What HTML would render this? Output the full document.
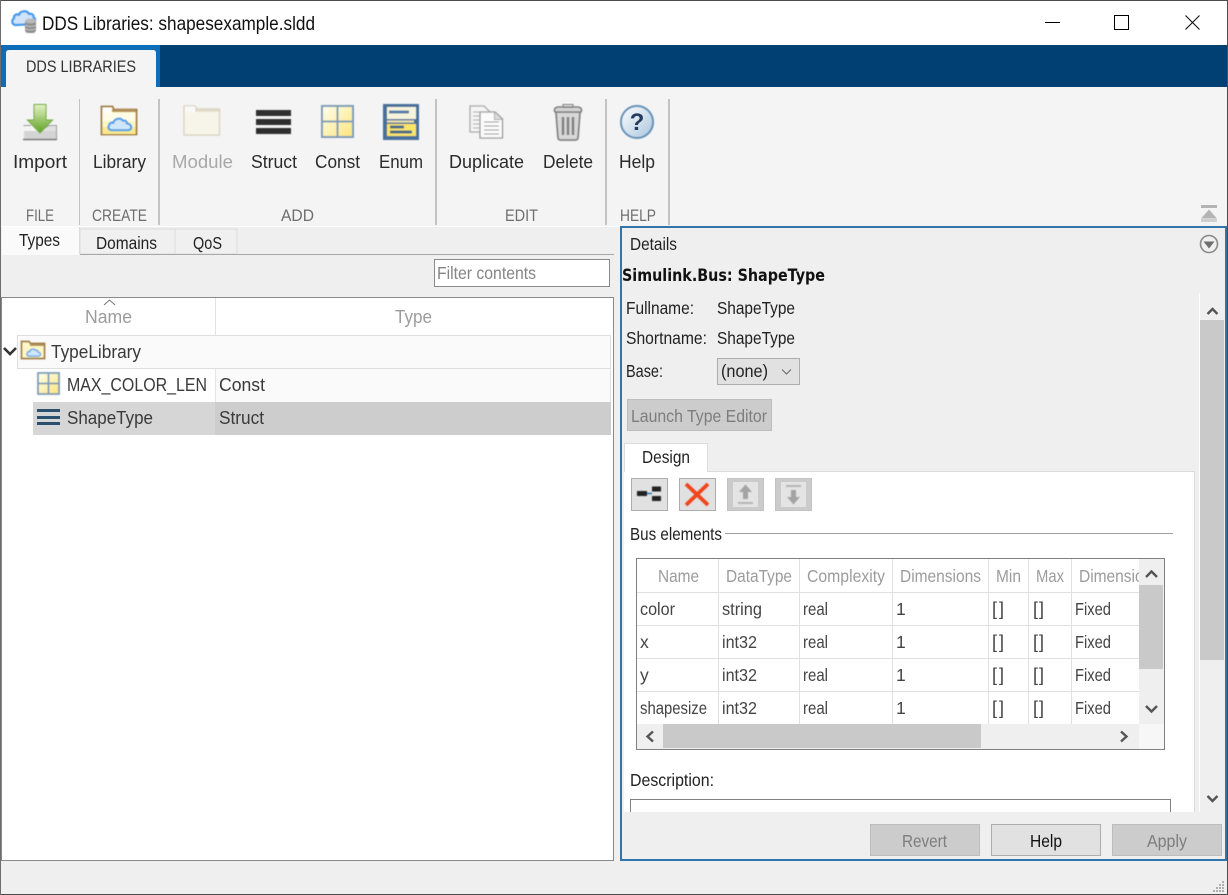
<!DOCTYPE html>
<html><head><meta charset="utf-8"><title>DDS Libraries: shapesexample.sldd</title>
<style>
html,body{margin:0;padding:0;width:1228px;height:895px;overflow:hidden;background:#fff}
svg{display:block}
text{font-family:"Liberation Sans",sans-serif;font-size:17.5px;fill:#262626;white-space:pre}
.l{fill:#2b2b2b;font-size:18.5px}
.g{fill:#6e6e6e;font-size:17px}
.d{fill:#a8a8a8}
.t{fill:#444;font-size:17.5px}
.h{fill:#9c9c9c;font-size:17.5px}
.s{font-size:17.5px;fill:#222}
.r{font-size:18.5px;fill:#3a3a3a}
.o{font-size:17.500px;fill:#7d7d7d}
.b{font-size:18px;fill:#444}
</style></head><body>
<svg width="1228" height="895" viewBox="0 0 1228 895" xmlns="http://www.w3.org/2000/svg">
<defs>
<linearGradient id="fy" x1="0" y1="0" x2="1" y2="1"><stop offset="0" stop-color="#fffff0"/><stop offset="1" stop-color="#fbe47a"/></linearGradient>
<linearGradient id="gr" x1="0" y1="0" x2="0" y2="1"><stop offset="0" stop-color="#e4f2c4"/><stop offset="1" stop-color="#5fa224"/></linearGradient>
<linearGradient id="hb" x1="0" y1="0" x2="1" y2="1"><stop offset="0" stop-color="#fff"/><stop offset="1" stop-color="#a9c6dd"/></linearGradient>
<filter id="bl" x="-10%" y="-10%" width="120%" height="120%"><feGaussianBlur stdDeviation=".45"/></filter>
<clipPath id="tc"><rect x="637" y="559" width="502" height="165"/></clipPath>
<symbol id="cloud" viewBox="0 0 26 16"><path d="M6 14.500C2.500 14.500 1.500 11.500 3 9.800 3 7.500 5.500 6.500 7 7.500 8 3 14 1.800 16.500 5.500 18.500 4.500 20.500 6 20 8 23.500 8 25 11 24 13 23.500 14 22.500 14.500 21 14.500Z" fill="#cfe6fb" stroke="#4d9fe8" stroke-width="2" stroke-linejoin="round"/></symbol>
</defs>

<!-- window -->
<rect width="1228" height="895" fill="#efefef"/>
<rect x="0" y="0" width="1228" height="45" fill="#fff"/>
<rect x="0" y="0" width="1228" height="1" fill="#4d4d4d"/>

<!-- title icon -->
<g filter="url(#bl)">
<path d="M16 25C12 25 11 20 14 18.500 13.500 15 17 13.500 19 15 20 10.500 27 10 29 14 31.500 13 34 15 33.500 17.500 36 18.500 35.500 23 33 24Z" fill="#cfe4fa" stroke="#3f98ea" stroke-width="2.200" stroke-linejoin="round"/>
<rect x="25" y="20" width="11" height="13" rx="3" fill="#8d8d8d"/>
<ellipse cx="30.500" cy="21" rx="5.500" ry="2.500" fill="#b9b9b9"/>
<path d="M25.500 25.500q5 2 10 0M25.500 29q5 2 10 0" stroke="#c8c8c8" fill="none"/>
</g>
<text x="42" y="30" style="font-size:19.500px;fill:#111" textLength="273" lengthAdjust="spacingAndGlyphs">DDS Libraries: shapesexample.sldd</text>

<!-- window controls -->
<rect x="1045" y="22" width="15" height="1" fill="#000"/>
<rect x="1114.500" y="15.500" width="14" height="14" fill="none" stroke="#000"/>
<path d="M1185.500 15.500L1199.500 29.500M1199.500 15.500L1185.500 29.500" stroke="#111" stroke-width="1.100"/>

<!-- ribbon band -->
<rect x="1" y="45" width="1227" height="42" fill="#004072"/>
<rect x="1" y="45" width="159" height="42" fill="#0f6cb6"/>
<path d="M6 87V53q0-3 3-3H153q3 0 3 3V87Z" fill="#f4f4f4"/>
<text x="26" y="72" style="font-size:16.500px;fill:#333" textLength="110" lengthAdjust="spacingAndGlyphs">DDS LIBRARIES</text>

<!-- ribbon -->
<rect x="1" y="87" width="1227" height="139" fill="#f4f4f4"/>
<g fill="#c3c3c3">
<rect x="79" y="99" width="1" height="126"/>
<rect x="158" y="99" width="2" height="126"/>
<rect x="435" y="99" width="2" height="126"/>
<rect x="605" y="99" width="2" height="126"/>
<rect x="668" y="99" width="2" height="126"/>
</g>

<g filter="url(#bl)">
<!-- Import icon -->
<path d="M23.500 125.500H31M49 125.500H56.500V139.500H23.500Z" fill="#e0e0e0" stroke="#9a9a9a"/>
<rect x="24" y="131" width="32" height="8" fill="#d4d4d4"/>
<path d="M23 139.500H57" stroke="#777" stroke-width="1.500"/>
<path d="M34 104.500H46V120H52.500L40 133 27.500 120H34Z" fill="url(#gr)" stroke="#6fa83a"/>

<!-- Library icon -->
<path d="M101.500 134.500V106.500H112.500L114 109.500H136.500V134.500Z" fill="#fdf6c6" stroke="#a07c44" stroke-width="1.800"/>
<path d="M112 110.500H136" stroke="#b08e58" stroke-width="3"/>
<rect x="102.500" y="107.500" width="9" height="6" fill="#fff"/>
<rect x="102.500" y="113" width="33" height="8" fill="#fffde8"/>
<rect x="102.500" y="127" width="33" height="7" fill="#fbe98e"/>
<use href="#cloud" x="106" y="115" width="27" height="17"/>

<!-- Module icon -->
<g opacity=".45">
<path d="M184 135V106H195L197 109H219.500V135Z" fill="#fbf5dc" stroke="#bfae8a" stroke-width="1.500"/>
<path d="M195 110.500H219" stroke="#c9b68e" stroke-width="2.500"/>
<path d="M185 106.500V112H195V106.500Z" fill="#fff"/>
</g>

<!-- Struct -->
<rect x="256" y="110" width="35" height="6" fill="#2e2e2e"/>
<rect x="256" y="119" width="35" height="6" fill="#2e2e2e"/>
<rect x="256" y="128" width="35" height="6" fill="#2e2e2e"/>

<!-- Const -->
<rect x="322" y="106" width="31" height="31" fill="url(#fy)" stroke="#7f9db8" stroke-width="2"/>
<path d="M337.500 106V137M322 121.500H353" stroke="#7f9db8" stroke-width="2"/>

<!-- Enum -->
<rect x="383" y="104" width="36" height="36" fill="#486f9a"/>
<rect x="387" y="107" width="29" height="12" fill="#f6f3dc"/>
<rect x="389" y="110.500" width="20" height="3" fill="#4f7ba6"/>
<rect x="387" y="120.500" width="27" height="2" fill="#eae3b0"/>
<rect x="387" y="124" width="29" height="12" fill="#f9e568"/>
<rect x="390" y="125.500" width="14" height="3" fill="#4a6a8a"/>
<rect x="390" y="130.500" width="22" height="3" fill="#4a6a8a"/>

<!-- Duplicate -->
<path d="M470 106H484L490 112V132H470Z" fill="#f4f4f4" stroke="#a9a9a9" stroke-width="1.300"/>
<path d="M473 112H482M473 116H486M473 120H486M473 124H486M473 128H486" stroke="#aaa"/>
<path d="M480 112H495L502.500 119V138H480Z" fill="#fbfbfb" stroke="#9a9a9a" stroke-width="1.300"/>
<path d="M494.500 112.500V119.500H502" fill="#ddd" stroke="#aaa"/>
<path d="M484 122H499M484 126H499M484 130H499M484 134H499" stroke="#8d8d8d"/>

<!-- Delete -->
<path d="M556 112L558 138q.3 2 3 2H575q2.700 0 3-2L580 112Z" fill="#d8d8d8" stroke="#7f7f7f" stroke-width="1.700"/>
<path d="M555 112q-2-4 3-5H578q5 1 3 5Z" fill="#d4d4d4" stroke="#7f7f7f" stroke-width="1.500"/>
<rect x="563" y="104.500" width="10" height="3" fill="none" stroke="#7f7f7f"/>
<path d="M563 117V135M568 117V135M573 117V135" stroke="#7c7c7c" stroke-width="2.400"/>

<!-- Help -->
<circle cx="637" cy="122" r="16" fill="url(#hb)" stroke="#6090b8" stroke-width="2"/>
</g>
<text x="637" y="130" text-anchor="middle" style="font-size:24px;font-weight:bold;fill:#253a5c">?</text>

<!-- Ribbon labels -->
<text class="l" x="13" y="168" textLength="54" lengthAdjust="spacingAndGlyphs">Import</text>
<text class="l" x="93" y="168" textLength="53" lengthAdjust="spacingAndGlyphs">Library</text>
<text class="l d" x="172" y="168" textLength="61" lengthAdjust="spacingAndGlyphs">Module</text>
<text class="l" x="251" y="168" textLength="46" lengthAdjust="spacingAndGlyphs">Struct</text>
<text class="l" x="315" y="168" textLength="45" lengthAdjust="spacingAndGlyphs">Const</text>
<text class="l" x="379" y="168" textLength="44" lengthAdjust="spacingAndGlyphs">Enum</text>
<text class="l" x="449" y="168" textLength="75" lengthAdjust="spacingAndGlyphs">Duplicate</text>
<text class="l" x="543" y="168" textLength="50" lengthAdjust="spacingAndGlyphs">Delete</text>
<text class="l" x="619" y="168" textLength="36" lengthAdjust="spacingAndGlyphs">Help</text>
<text class="g" x="26" y="221" textLength="28" lengthAdjust="spacingAndGlyphs">FILE</text>
<text class="g" x="92" y="221" textLength="55" lengthAdjust="spacingAndGlyphs">CREATE</text>
<text class="g" x="281" y="221" textLength="33" lengthAdjust="spacingAndGlyphs">ADD</text>
<text class="g" x="505" y="221" textLength="33" lengthAdjust="spacingAndGlyphs">EDIT</text>
<text class="g" x="620" y="221" textLength="36" lengthAdjust="spacingAndGlyphs">HELP</text>

<!-- collapse ribbon -->
<rect x="1201" y="205" width="16" height="3" fill="#b4b4b4"/>
<path d="M1209 209.500L1217 218.500H1201Z" fill="#b4b4b4"/>
<rect x="1201" y="219" width="16" height="3" fill="#cfcfcf"/>

<!-- left panel -->
<rect x="1" y="226" width="619" height="635" fill="#efefef"/>
<rect x="1" y="226" width="1227" height="1" fill="#fff"/>
<rect x="80" y="229" width="95" height="25" fill="#f0f0f0" stroke="#dcdcdc"/>
<rect x="175" y="229" width="62" height="25" fill="#f0f0f0" stroke="#dcdcdc"/>
<rect x="80" y="254" width="534" height="1" fill="#a8a8a8"/>
<rect x="2" y="227" width="77" height="28" fill="#fafafa"/>
<rect x="79" y="227" width="1" height="27" fill="#dcdcdc"/>
<text class="s" x="19" y="246" textLength="41" lengthAdjust="spacingAndGlyphs">Types</text>
<text class="s" x="96" y="249" textLength="61" lengthAdjust="spacingAndGlyphs">Domains</text>
<text class="s" x="193" y="249" textLength="29" lengthAdjust="spacingAndGlyphs">QoS</text>
<rect x="434.500" y="259.500" width="175" height="27" fill="#fff" stroke="#8a8a8a"/>
<text x="437" y="279" style="font-size:17.500px;fill:#858585" textLength="99" lengthAdjust="spacingAndGlyphs">Filter contents</text>

<!-- tree -->
<rect x="1" y="297" width="613" height="564" fill="#fff"/>
<rect x="1" y="297" width="613" height="1" fill="#8a8a8a"/>
<rect x="1" y="297" width="1" height="564" fill="#8a8a8a"/>
<rect x="613" y="297" width="1" height="564" fill="#8a8a8a"/>
<rect x="1" y="860" width="613" height="1" fill="#8a8a8a"/>
<rect x="215" y="298" width="1" height="37" fill="#e2e2e2"/>
<path d="M104 305L109.500 300 115 305" fill="none" stroke="#777"/>
<text class="h" x="85" y="323" style="font-size:18.500px" textLength="47" lengthAdjust="spacingAndGlyphs">Name</text>
<text class="h" x="395" y="323" style="font-size:18.500px" textLength="37" lengthAdjust="spacingAndGlyphs">Type</text>
<rect x="17.500" y="335.500" width="593" height="33" fill="#fafafa" stroke="#dedede"/>
<path d="M4 348L10 354 16 348" fill="none" stroke="#333" stroke-width="2.600"/>
<g filter="url(#bl)">
<path d="M21.500 358.500V341.500H29L30.500 343.500H44.500V358.500Z" fill="#fdf6c6" stroke="#a07c44" stroke-width="1.700"/>
<path d="M30 345H44" stroke="#b08e58" stroke-width="2"/>
<use href="#cloud" x="25" y="347" width="17" height="10"/>
<rect x="38" y="373" width="21" height="21" fill="url(#fy)" stroke="#7f9db8" stroke-width="1.800"/>
<path d="M48.500 373V394M38 383.500H59" stroke="#7f9db8" stroke-width="1.800"/>
</g>
<text class="r" x="51" y="358" textLength="90" lengthAdjust="spacingAndGlyphs">TypeLibrary</text>
<rect x="33" y="369" width="578" height="33" fill="#fafafa"/>
<rect x="33" y="369" width="182" height="33" fill="#fff"/>
<rect x="215" y="369" width="1" height="33" fill="#e6e6e6"/>
<rect x="610" y="369" width="1" height="33" fill="#e0e0e0"/>
<g filter="url(#bl)">
<rect x="38" y="373" width="21" height="21" fill="url(#fy)" stroke="#7f9db8" stroke-width="1.800"/>
<path d="M48.500 373V394M38 383.500H59" stroke="#7f9db8" stroke-width="1.800"/>
</g>
<text class="r" x="67" y="391" textLength="140" lengthAdjust="spacingAndGlyphs">MAX_COLOR_LEN</text>
<text class="r" x="219" y="391" textLength="46" lengthAdjust="spacingAndGlyphs">Const</text>
<rect x="33" y="402" width="182" height="33" fill="#d6d6d6"/>
<rect x="215" y="402" width="396" height="33" fill="#cdcdcd"/>
<rect x="37" y="409" width="23" height="3" fill="#2b4f6e"/>
<rect x="37" y="416" width="23" height="3" fill="#2b4f6e"/>
<rect x="37" y="422" width="23" height="3" fill="#2b4f6e"/>
<text class="r" x="67" y="424" textLength="86" lengthAdjust="spacingAndGlyphs">ShapeType</text>
<text class="r" x="219" y="424" textLength="45" lengthAdjust="spacingAndGlyphs">Struct</text>

<!-- right panel -->
<rect x="621" y="227" width="605" height="633" fill="#efefef" stroke="#2f74ab" stroke-width="2"/>
<text class="s" x="630" y="250" textLength="47" lengthAdjust="spacingAndGlyphs">Details</text>
<circle cx="1209" cy="244" r="8.500" fill="none" stroke="#8a8a8a" stroke-width="1.600"/>
<path d="M1203.500 241.500H1214.500L1209 248.500Z" fill="#6e6e6e"/>
<text x="622" y="281" style="font-family:'DejaVu Sans',sans-serif;font-size:16.500px;font-weight:bold;fill:#111" textLength="203" lengthAdjust="spacingAndGlyphs">Simulink.Bus: ShapeType</text>

<text class="s" x="626" y="314" textLength="68" lengthAdjust="spacingAndGlyphs">Fullname:</text>
<text class="s" x="717" y="314" textLength="78" lengthAdjust="spacingAndGlyphs">ShapeType</text>
<text class="s" x="626" y="344" textLength="81" lengthAdjust="spacingAndGlyphs">Shortname:</text>
<text class="s" x="717" y="344" textLength="78" lengthAdjust="spacingAndGlyphs">ShapeType</text>
<text class="s" x="626" y="377" textLength="37" lengthAdjust="spacingAndGlyphs">Base:</text>
<rect x="717.500" y="358.500" width="82" height="26" fill="#e1e1e1" stroke="#adadad"/>
<text class="s" x="721" y="377" textLength="47" lengthAdjust="spacingAndGlyphs">(none)</text>
<path d="M782 369.500L786.500 374 791 369.500" fill="none" stroke="#666"/>
<rect x="627.500" y="399.500" width="144" height="31" fill="#ccc" stroke="#bdbdbd"/>
<text class="o" x="631" y="422" textLength="136" lengthAdjust="spacingAndGlyphs">Launch Type Editor</text>

<!-- design panel -->
<rect x="624" y="471" width="570" height="341" fill="#fff"/>
<rect x="624" y="471" width="571" height="1" fill="#dcdcdc"/>
<rect x="1194" y="471" width="1" height="341" fill="#dcdcdc"/>
<rect x="624" y="443" width="83" height="29" fill="#fff"/>
<path d="M624.500 472V443.500H707.500V472" fill="none" stroke="#dcdcdc"/>
<rect x="625" y="471" width="82" height="2" fill="#fff"/>
<text class="s" x="642" y="463" textLength="48" lengthAdjust="spacingAndGlyphs">Design</text>

<!-- design toolbar -->
<rect x="631.500" y="478.500" width="36" height="32" fill="#e1e1e1" stroke="#adadad"/>
<rect x="679.500" y="478.500" width="36" height="32" fill="#e1e1e1" stroke="#adadad"/>
<rect x="727.500" y="478.500" width="36" height="32" fill="#cbcbcb" stroke="#c2c2c2"/>
<rect x="733" y="482" width="25" height="25" fill="#e4e4e4"/>
<rect x="775.500" y="478.500" width="36" height="32" fill="#cbcbcb" stroke="#c2c2c2"/>
<rect x="781" y="482" width="25" height="25" fill="#e4e4e4"/>
<g filter="url(#bl)">
<rect x="637" y="491" width="10" height="5" fill="#222"/>
<path d="M647 493.500H652" stroke="#2f74ab" stroke-width="1.500"/>
<rect x="652" y="486.500" width="9" height="5" fill="#222"/>
<rect x="652" y="496" width="9" height="5" fill="#222"/>
<path d="M686 484L708 505M708 484L686 505" stroke="#f0441c" stroke-width="3.800"/>
<path d="M745.500 484.500L752 492H748V499H743V492H739Z" fill="#a3a3a3"/>
<rect x="738" y="502" width="15" height="2" fill="#b5b5b5"/>
<path d="M793.500 504.500L787 497H791V490H796V497H800Z" fill="#a3a3a3"/>
<rect x="786" y="485" width="15" height="2" fill="#b5b5b5"/>
</g>

<text class="s" x="630" y="540" textLength="92" lengthAdjust="spacingAndGlyphs">Bus elements</text>
<rect x="725" y="533" width="448" height="1" fill="#a0a0a0"/>

<!-- bus table -->
<rect x="636.500" y="558.500" width="528" height="191" fill="#fff" stroke="#808080"/>
<g fill="#e0e0e0">
<rect x="637" y="592" width="502" height="1"/>
<rect x="637" y="625" width="502" height="1"/>
<rect x="637" y="658" width="502" height="1"/>
<rect x="637" y="691" width="502" height="1"/>
<rect x="718" y="559" width="1" height="165"/>
<rect x="799" y="559" width="1" height="165"/>
<rect x="892" y="559" width="1" height="165"/>
<rect x="988" y="559" width="1" height="165"/>
<rect x="1028" y="559" width="1" height="165"/>
<rect x="1071" y="559" width="1" height="165"/>
</g>
<g clip-path="url(#tc)">
<text class="h" x="658" y="582" textLength="41" lengthAdjust="spacingAndGlyphs">Name</text>
<text class="h" x="726" y="582" textLength="66" lengthAdjust="spacingAndGlyphs">DataType</text>
<text class="h" x="807" y="582" textLength="78" lengthAdjust="spacingAndGlyphs">Complexity</text>
<text class="h" x="900" y="582" textLength="54" lengthAdjust="spacingAndGlyphs" style="display:none"></text>
<text class="h" x="900" y="582" textLength="81" lengthAdjust="spacingAndGlyphs">Dimensions</text>
<text class="h" x="996" y="582" textLength="25" lengthAdjust="spacingAndGlyphs">Min</text>
<text class="h" x="1036" y="582" textLength="28" lengthAdjust="spacingAndGlyphs">Max</text>
<text class="h" x="1079" y="582" textLength="81" lengthAdjust="spacingAndGlyphs">Dimensions</text>

<text class="t" x="640" y="615" textLength="35" lengthAdjust="spacingAndGlyphs">color</text>
<text class="t" x="722" y="615" textLength="40" lengthAdjust="spacingAndGlyphs">string</text>
<text class="t" x="803" y="615" textLength="25" lengthAdjust="spacingAndGlyphs">real</text>
<text class="t" x="896" y="615">1</text>
<text class="b" x="992" y="615" textLength="12">[]</text>
<text class="b" x="1033" y="615" textLength="11">[]</text>
<text class="t" x="1075" y="615" textLength="36" lengthAdjust="spacingAndGlyphs">Fixed</text>

<text class="t" x="640" y="648">x</text>
<text class="t" x="722" y="648" textLength="35" lengthAdjust="spacingAndGlyphs">int32</text>
<text class="t" x="803" y="648" textLength="25" lengthAdjust="spacingAndGlyphs">real</text>
<text class="t" x="896" y="648">1</text>
<text class="b" x="992" y="648" textLength="12">[]</text>
<text class="b" x="1033" y="648" textLength="11">[]</text>
<text class="t" x="1075" y="648" textLength="36" lengthAdjust="spacingAndGlyphs">Fixed</text>

<text class="t" x="640" y="681">y</text>
<text class="t" x="722" y="681" textLength="35" lengthAdjust="spacingAndGlyphs">int32</text>
<text class="t" x="803" y="681" textLength="25" lengthAdjust="spacingAndGlyphs">real</text>
<text class="t" x="896" y="681">1</text>
<text class="b" x="992" y="681" textLength="12">[]</text>
<text class="b" x="1033" y="681" textLength="11">[]</text>
<text class="t" x="1075" y="681" textLength="36" lengthAdjust="spacingAndGlyphs">Fixed</text>

<text class="t" x="640" y="714" textLength="67" lengthAdjust="spacingAndGlyphs">shapesize</text>
<text class="t" x="722" y="714" textLength="35" lengthAdjust="spacingAndGlyphs">int32</text>
<text class="t" x="803" y="714" textLength="25" lengthAdjust="spacingAndGlyphs">real</text>
<text class="t" x="896" y="714">1</text>
<text class="b" x="992" y="714" textLength="12">[]</text>
<text class="b" x="1033" y="714" textLength="11">[]</text>
<text class="t" x="1075" y="714" textLength="36" lengthAdjust="spacingAndGlyphs">Fixed</text>
</g>
<!-- table scrollbars -->
<rect x="1139" y="559" width="25" height="190" fill="#efefef"/>
<rect x="637" y="724" width="527" height="25" fill="#efefef"/>
<rect x="1139" y="585" width="24" height="84" fill="#c9c9c9"/>
<rect x="663" y="724" width="318" height="24" fill="#c9c9c9"/>
<rect x="1139" y="724" width="25" height="25" fill="#f7f7f7"/>
<g fill="none" stroke="#555" stroke-width="2.400">
<path d="M1146 577L1151.500 571.500 1157 577"/>
<path d="M1146 706L1151.500 711.500 1157 706"/>
<path d="M653 731.500L647.500 736.500 653 741.500"/>
<path d="M1121 731.500L1126.500 736.500 1121 741.500"/>
</g>

<text class="s" x="630" y="786" textLength="84" lengthAdjust="spacingAndGlyphs">Description:</text>
<rect x="630.500" y="799.500" width="540" height="20" fill="#fff" stroke="#808080"/>

<!-- outer scrollbar -->
<rect x="1199" y="293" width="1" height="519" fill="#fff"/>
<rect x="1200" y="320" width="24" height="340" fill="#c9c9c9"/>
<path d="M1207.500 314L1212.500 309 1217.500 314" fill="none" stroke="#555" stroke-width="2.400"/>
<path d="M1207.500 796L1212.500 801 1217.500 796" fill="none" stroke="#555" stroke-width="2.400"/>

<!-- bottom bar -->
<rect x="622" y="812" width="603" height="47" fill="#efefef"/>
<rect x="870.500" y="824.500" width="109" height="31" fill="#ccc" stroke="#bdbdbd"/>
<text class="o" x="902" y="847" textLength="45" lengthAdjust="spacingAndGlyphs">Revert</text>
<rect x="991.500" y="824.500" width="109" height="31" fill="#e1e1e1" stroke="#adadad"/>
<text x="1030" y="847" style="font-size:17.500px;fill:#111" textLength="32" lengthAdjust="spacingAndGlyphs">Help</text>
<rect x="1112.500" y="824.500" width="109" height="31" fill="#ccc" stroke="#bdbdbd"/>
<text class="o" x="1147" y="847" textLength="40" lengthAdjust="spacingAndGlyphs">Apply</text>

<!-- status + frame -->
<rect x="0" y="894" width="1228" height="1" fill="#4a4a4a"/>
<rect x="0" y="0" width="1" height="895" fill="#6d6d6d"/>
<rect x="1227" y="0" width="1" height="895" fill="#4d4d4d"/>
<g fill="#b0b0b0">
<rect x="1222" y="881" width="2" height="2"/>
<rect x="1219" y="884" width="2" height="2"/><rect x="1222" y="884" width="2" height="2"/>
<rect x="1216" y="887" width="2" height="2"/><rect x="1219" y="887" width="2" height="2"/><rect x="1222" y="887" width="2" height="2"/>
<rect x="1213" y="890" width="2" height="2"/><rect x="1216" y="890" width="2" height="2"/><rect x="1219" y="890" width="2" height="2"/><rect x="1222" y="890" width="2" height="2"/>
</g>
</svg>
</body></html>
